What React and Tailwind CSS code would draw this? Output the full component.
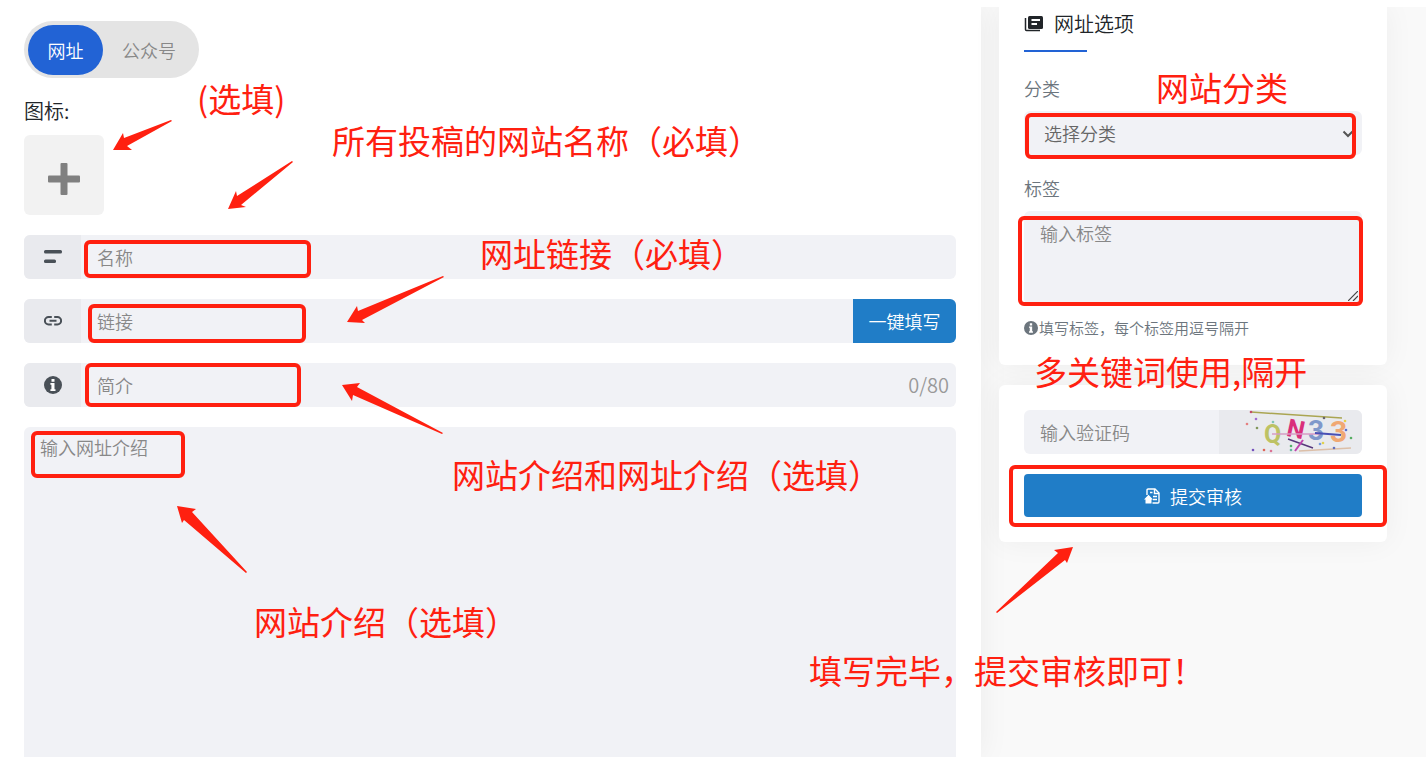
import { useState } from 'react'

const LEFT_MARKS = [
  { left: 84, top: 233, width: 227, height: 38 },
  { left: 88, top: 297, width: 218, height: 39 },
  { left: 85, top: 356, width: 216, height: 44 },
  { left: 31, top: 424, width: 154, height: 47 },
]

const LEFT_ARROWS = [
  '113,143 123,126 124,131 171,113 172,114 127,139 132,143',
  '228,202 236,184 237,189 292,154 293,155 241,198 246,200',
  '347,315 357,299 358,304 443,269 444,270 362,313 365,316',
  '342,378 360,376 357,380 443,426 442,427 353,388 352,394',
  '177,499 196,502 192,505 247,565 246,566 184,513 182,516',
]

const LEFT_NOTES = [
  { text: '(选填)', left: 197, top: 75 },
  { text: '所有投稿的网站名称（必填）', left: 332, top: 117 },
  { text: '网址链接（必填）', left: 480, top: 230 },
  { text: '网站介绍和网址介绍（选填）', left: 452, top: 451 },
  { text: '网站介绍（选填）', left: 254, top: 598 },
]

// Right hand marks are measured from the sidebar's own corner
const RIGHT_MARKS = [
  { left: 26, top: 106, width: 331, height: 46 },
  { left: 19, top: 209, width: 345, height: 90 },
  { left: 10, top: 458, width: 378, height: 62 },
]

const RIGHT_ARROWS = ['74,540 55,543 59,546 -3,605 -2,606 66,553 68,556']

const RIGHT_NOTES = [
  { text: '网站分类', left: 157, top: 64 },
  { text: '多关键词使用,隔开', left: 35, top: 348 },
  { text: '填写完毕，提交审核即可！', left: -190, top: 647 },
]

function Annotations({ marks, arrows, notes }) {
  return (
    <div className="pointer-events-none absolute inset-0 z-10">
      {marks.map((m) => (
        <div key={m.top} className="absolute rounded-md border-4 border-[#ff2010]" style={m} />
      ))}
      <svg className="absolute inset-0 h-full w-full overflow-visible" fill="#ff2010" aria-hidden="true">
        {arrows.map((points) => (
          <polygon key={points} points={points} />
        ))}
      </svg>
      {notes.map(({ text, left, top }) => (
        <p
          key={text}
          className="absolute text-[33px] leading-none font-normal whitespace-nowrap text-[#ff2010]"
          style={{ left, top }}
        >
          {text}
        </p>
      ))}
    </div>
  )
}

function InfoIcon({ className }) {
  return (
    <svg viewBox="0 0 18 18" className={className} aria-hidden="true">
      <circle cx="9" cy="9" r="9" fill="currentColor" />
      <path d="M7.5 3h3v2.8h-3zM6.4 7h4.1v6.300h1v1.700H6.400v-1.700h1V8.700h-1z" fill="#fff" />
    </svg>
  )
}

function LinesIcon() {
  return (
    <svg viewBox="0 0 18 18" className="size-[18px]" fill="currentColor" aria-hidden="true">
      <rect y="2" width="18" height="3.500" rx="1.500" />
      <rect y="11.500" width="12" height="3.500" rx="1.500" />
    </svg>
  )
}

function LinkIcon() {
  return (
    <svg viewBox="0 0 18 18" className="size-[18px]" fill="none" stroke="currentColor" strokeWidth="2" aria-hidden="true">
      <path d="M7.8 5H4.600a3.600 3.600 0 0 0 0 7.400h3.200M10.200 5h3.200a3.600 3.600 0 0 1 0 7.400h-3.200M5.500 8.700h7" />
    </svg>
  )
}

function OptionsIcon() {
  return (
    <svg viewBox="0 0 20 18" className="h-[18px] w-5" aria-hidden="true">
      <path d="M1.500 3v11.500q0 1 1 1H16" fill="none" stroke="currentColor" strokeWidth="1.500" />
      <rect x="4" y="1" width="15" height="13" rx="1.500" fill="currentColor" />
      <path d="M7.500 5h8.500M7.500 9h5.500" stroke="#fff" strokeWidth="1.800" />
    </svg>
  )
}

function SubmitIcon() {
  return (
    <svg viewBox="0 0 16 16" className="size-4" fill="none" stroke="currentColor" strokeWidth="1.400" aria-hidden="true">
      <path d="M3 7V2.200Q3 1 4.200 1H11l4 4v8.800q0 1.200-1.200 1.200H8.500" />
      <path d="M10.500 1v4.500H15M6 4.500h2.500M9 8.500h4M9 11.500h4" />
      <path d="M4.500 6.800 0 11.500h1.500v4h6v-4H9z" fill="currentColor" stroke="none" />
    </svg>
  )
}

function Captcha() {
  return (
    <svg viewBox="0 0 143 44" className="h-11 w-[143px]" role="img" aria-label="验证码">
      {/* noise lines and dots go over the letters */}
      <g fontFamily="Roboto, Liberation Sans, sans-serif" fontWeight="700">
        <text x="45" y="33" fontSize="25" fill="#bdc264">Q</text>
        <text x="68" y="28" fontSize="25" fill="#d92f7b" transform="rotate(12 78 20)">N</text>
        <text x="89" y="30" fontSize="28" fill="#7f98cb">3</text>
        <text x="111" y="32" fontSize="30" fill="#f0a873">3</text>
      </g>
      <g fill="none" strokeWidth="1.500">
        <path d="M32 2 123 8" stroke="#aaa552" />
        <path d="M53 24h48" stroke="#d79bc4" />
        <path d="M96 23l26 2" stroke="#4750b5" strokeWidth="2" />
        <path d="M69 29l25 9" stroke="#56367a" />
        <path d="M84 30 76 41" stroke="#c044ae" strokeWidth="2" />
        <path d="M80 41l52-3" stroke="#dcbfa8" />
      </g>
      <g>
        <circle cx="32" cy="2" r="1.300" fill="#c34b6b" />
        <circle cx="37" cy="9" r="1.300" fill="#a16bd0" />
        <circle cx="28" cy="14" r="1.300" fill="#e58080" />
        <circle cx="38" cy="18" r="1.300" fill="#81975a" />
        <circle cx="54" cy="12" r="1.300" fill="#83c5b4" />
        <circle cx="105" cy="8" r="1.300" fill="#67656d" />
        <circle cx="126" cy="11" r="1.300" fill="#e8cf48" />
        <circle cx="127" cy="20" r="1.300" fill="#5970cc" />
        <circle cx="132" cy="28" r="1.300" fill="#56ad63" />
        <circle cx="104" cy="33" r="1.300" fill="#e1d34f" />
        <circle cx="101" cy="34" r="1.300" fill="#759bdc" />
        <circle cx="72" cy="36" r="1.300" fill="#55b06c" />
        <circle cx="72" cy="40" r="1.300" fill="#66b8a0" />
        <circle cx="34" cy="40" r="1.300" fill="#7652bd" />
        <circle cx="45" cy="40" r="1.300" fill="#df6659" />
        <circle cx="52" cy="41" r="1.300" fill="#db7495" />
        <circle cx="115" cy="38" r="1.300" fill="#6371bd" />
      </g>
    </svg>
  )
}

function Field({ id, label, icon, children, ...props }) {
  return (
    <div className="flex h-11 overflow-hidden rounded-md bg-[#f1f2f6]">
      <label htmlFor={id} aria-label={label} className="flex w-[57px] shrink-0 items-center justify-center bg-[#e9eaee] text-[#495057]">
        {icon}
      </label>
      <input id={id} type="text" placeholder={label} className="min-w-0 flex-1 px-4 placeholder:text-[#888]" {...props} />
      {children}
    </div>
  )
}

export default function App() {
  const [tab, setTab] = useState('site')
  const [intro, setIntro] = useState('')

  const tabColor = (name) => (tab === name ? 'bg-[#2263d5] text-white' : 'text-[#888]')

  return (
    <div className="flex min-h-screen flex-col overflow-hidden bg-white font-['Noto_Sans_CJK_SC',sans-serif] text-lg font-[350] text-[#212529]">
      <div className="mt-[7px] flex flex-1 gap-[18px] overflow-hidden bg-[#f9f9f9] pr-[39px]">
        <main className="relative flex min-w-0 flex-1 flex-col bg-white px-6 pt-[14px] pr-[25px] shadow-[0_0_30px_rgba(0,0,0,0.06)]">
          <div className="flex self-start rounded-full bg-[#e4e4e4] px-1 pt-1 pb-[3px]">
            <button type="button" className={`h-[50px] w-[75px] rounded-full ${tabColor('site')}`} onClick={() => setTab('site')}>
              网址
            </button>
            <button type="button" className={`h-[50px] w-[92px] rounded-full ${tabColor('account')}`} onClick={() => setTab('account')}>
              公众号
            </button>
          </div>

          <span className="mt-[18px] text-xl leading-[30px]">图标:</span>
          <button type="button" aria-label="上传图标" className="mt-[9px] flex size-20 items-center justify-center rounded-md bg-[#f2f2f2]">
            <svg viewBox="0 0 32 32" className="mt-2 size-8" fill="#808080" aria-hidden="true">
              <rect x="12.500" width="7" height="32" rx="1" />
              <rect y="12.500" width="32" height="7" rx="1" />
            </svg>
          </button>

          <div className="mt-5 flex flex-1 flex-col gap-5">
            <Field id="name" label="名称" icon={<LinesIcon />} />
            <Field id="link" label="链接" icon={<LinkIcon />}>
              <button type="button" className="w-[103px] shrink-0 bg-[#207dc7] text-white">一键填写</button>
            </Field>
            <Field
              id="intro"
              label="简介"
              icon={<InfoIcon className="size-[18px]" />}
              maxLength={80}
              value={intro}
              onChange={(e) => setIntro(e.target.value)}
            >
              <span className="self-center pr-[7px] text-xl text-[#999]">{intro.length}/80</span>
            </Field>
            <textarea
              aria-label="网址介绍"
              placeholder="输入网址介绍"
              className="min-h-[330px] flex-1 resize-none rounded-t-md bg-[#f1f2f6] px-4 py-[6px] placeholder:text-[#888]"
            />
          </div>
          <Annotations marks={LEFT_MARKS} arrows={LEFT_ARROWS} notes={LEFT_NOTES} />
        </main>

        <aside className="relative flex w-[388px] shrink-0 flex-col gap-5">
          <section className="rounded-b-md bg-white px-[25px] pb-[26px] shadow-[0_0_30px_rgba(0,0,0,0.05)]">
            <h2 className="flex items-center gap-[10px] pt-[2px] text-xl leading-[30px]">
              <OptionsIcon />
              网址选项
            </h2>
            <div className="mt-[11px] h-[2px] w-[63px] bg-[#2263d5]" />
            <label htmlFor="category" className="mt-[23px] block leading-[26px] text-[#6c757d]">分类</label>
            <div className="relative mt-[10px]">
              <select id="category" className="h-11 w-full appearance-none rounded-md bg-[#f1f2f6] px-5 text-[#666]">
                <option>选择分类</option>
              </select>
              <svg viewBox="0 0 12 8" className="pointer-events-none absolute top-[19px] right-2 h-2 w-3" fill="none" stroke="#555" strokeWidth="2" aria-hidden="true">
                <path d="M1.500 1.500 6 6l4.500-4.500" />
              </svg>
            </div>
            <label htmlFor="tags" className="mt-5 block leading-[26px] text-[#6c757d]">标签</label>
            <div className="relative mt-[10px]">
              <textarea
                id="tags"
                placeholder="输入标签"
                className="block h-[94px] w-full resize-none rounded-md bg-[#f1f2f6] px-4 py-2 placeholder:text-[#888]"
              />
              <svg viewBox="0 0 10 10" className="pointer-events-none absolute right-1 bottom-1 size-[10px]" stroke="#444" strokeWidth="1.200" aria-hidden="true">
                <path d="M0 10 10 0M5 10l5-5" />
              </svg>
            </div>
            <p className="mt-3 flex items-center text-[15px] leading-[22px] text-[#6c757d]">
              <InfoIcon className="mr-[1px] size-[14px]" />
              填写标签，每个标签用逗号隔开
            </p>
          </section>

          <section className="rounded-md bg-white p-[25px] shadow-[0_0_30px_rgba(0,0,0,0.05)]">
            <div className="flex h-11 overflow-hidden rounded-md bg-[#f1f2f6]">
              <input type="text" aria-label="验证码" placeholder="输入验证码" className="min-w-0 flex-1 px-4 placeholder:text-[#888]" />
              <div className="shrink-0 bg-[#e9eaee]">
                <Captcha />
              </div>
            </div>
            <button type="submit" className="mt-5 flex h-[43px] w-full items-center justify-center gap-[10px] rounded-sm bg-[#207dc7] text-white">
              <SubmitIcon />
              提交审核
            </button>
          </section>
          <Annotations marks={RIGHT_MARKS} arrows={RIGHT_ARROWS} notes={RIGHT_NOTES} />
        </aside>
      </div>
    </div>
  )
}
